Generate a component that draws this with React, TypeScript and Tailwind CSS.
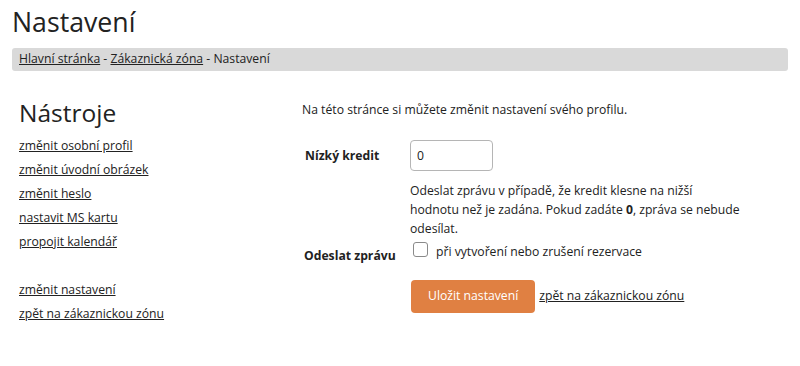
import React from "react";

export default function App() {
  return (
    <div className="w-[800px] h-[366px] bg-white text-[#222] font-['Open_Sans',sans-serif] text-[12.2px] overflow-hidden">
      <h1 className="px-3 pt-[3px] text-[26.7px] leading-[38px] text-[#222]">Nastavení</h1>
      <div className="mx-3 mt-[7px] h-[23px] rounded-[3px] bg-[#d9d9d9] px-[7px] flex items-center">
        <a className="underline">Hlavní stránka</a>
        <span>&nbsp;-&nbsp;</span>
        <a className="underline">Zákaznická zóna</a>
        <span>&nbsp;- Nastavení</span>
      </div>
      <div className="flex mt-[27px]">
        <div className="w-[283px] pl-[19px]">
          <h2 className="text-[24.5px] leading-[30px] mb-[6px]">Nástroje</h2>
          <div className="flex flex-col leading-[24px]">
            <a className="underline">změnit osobní profil</a>
            <a className="underline">změnit úvodní obrázek</a>
            <a className="underline">změnit heslo</a>
            <a className="underline">nastavit MS kartu</a>
            <a className="underline">propojit kalendář</a>
            <div className="h-[24px]" />
            <a className="underline">změnit nastavení</a>
            <a className="underline">zpět na zákaznickou zónu</a>
          </div>
        </div>
        <div className="pl-[19px] pt-[2px]">
          <p className="leading-[20px]">Na této stránce si můžete změnit nastavení svého profilu.</p>
          <div className="flex mt-[20px]">
            <div className="w-[108px] pl-[3px] font-bold pt-[7px]">Nízký kredit</div>
            <div>
              <input
                defaultValue="0"
                className="w-[83px] h-[31px] border border-[#b5b5b5] rounded-[4px] px-[6px] text-[12.2px] text-[#222] outline-none"
              />
              <p className="w-[360px] mt-[10px] leading-[19px]">
                Odeslat zprávu v případě, že kredit klesne na nižší
                <br />
                hodnotu než je zadána. Pokud zadáte <b>0</b>, zpráva se nebude
                <br />
                odesílat.
              </p>
            </div>
          </div>
          <div className="flex mt-[3px]">
            <div className="w-[108px] pl-[2px] font-bold pt-[6px]">Odeslat zprávu</div>
            <label className="flex items-start h-[26px] pl-[3px] pt-[1px]">
              <span className="w-[15px] h-[15px] border border-[#8a8a8a] rounded-[3px] bg-white mr-[8px]" />
              <span className="leading-[20px]">při vytvoření nebo zrušení rezervace</span>
            </label>
          </div>
          <div className="flex items-center mt-[13px] pl-[109px]">
            <button className="h-[33px] px-[17px] rounded-[4px] bg-[#e08042] text-white text-[12.2px]">Uložit nastavení</button>
            <a className="underline ml-[4px]">zpět na zákaznickou zónu</a>
          </div>
        </div>
      </div>
    </div>
  );
}
